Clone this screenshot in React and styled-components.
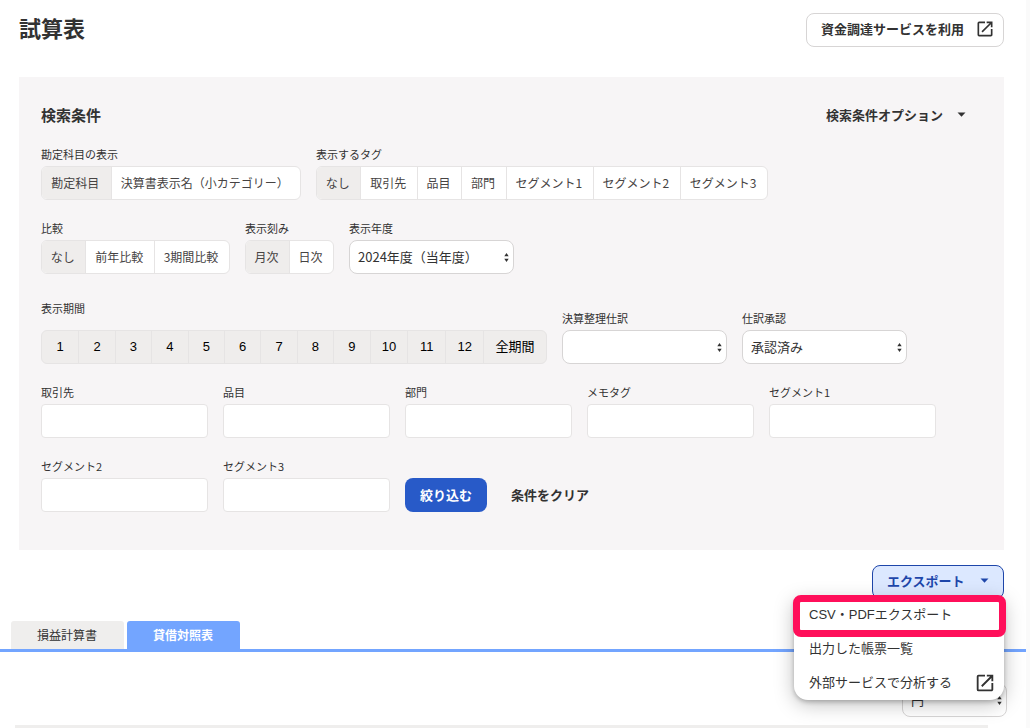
import React, { useId, useState } from "react";
import styled, { createGlobalStyle } from "styled-components";
import { MdOpenInNew } from "react-icons/md";

const GlobalStyle = createGlobalStyle`
  *, *::before, *::after { box-sizing: border-box; }
  body {
    margin: 0;
    background: #fff;
    color: #323232;
    font-family: "Noto Sans CJK JP", "Noto Sans", sans-serif;
    font-size: 13px;
    line-height: 20px;
  }
  button, input, select { font: inherit; color: inherit; margin: 0; }
  h1, h2 { margin: 0; }
`;

const Page = styled.main`
  border-right: 4px solid #fafafa;
`;

const PageHeader = styled.header`
  display: flex;
  justify-content: space-between;
  align-items: flex-start;
  padding: 13px 22px 0 19px;
  height: 77px;
`;

const Title = styled.h1`
  font-size: 22px;
  line-height: 28px;
  font-weight: 700;
`;

const LinkButton = styled.a`
  display: flex;
  align-items: center;
  gap: 11px;
  height: 34px;
  padding: 0 8px 2px 14px;
  border: 1px solid #d7d5d5;
  border-radius: 8px;
  background: #fff;
  color: #323232;
  font-weight: 700;
  text-decoration: none;
`;

const Panel = styled.section`
  margin: 0 22px 0 19px;
  padding: 26px 22px 38px;
  background: #f7f5f6;
`;

const PanelHeader = styled.div`
  display: flex;
  justify-content: space-between;
  align-items: center;
  height: 24px;
  margin-bottom: 19px;
  padding-right: 16px;
`;

const PanelTitle = styled.h2`
  font-size: 15px;
  line-height: 24px;
  font-weight: 700;
`;

const TextButton = styled.button`
  display: flex;
  align-items: center;
  gap: 14px;
  height: 34px;
  padding: 0 0 1px;
  border: 0;
  background: none;
  font-weight: 700;
  cursor: pointer;
`;

const Row = styled.div`
  display: flex;
  flex-wrap: wrap;
  align-items: flex-end;
  gap: 20px 15px;
  margin-top: ${(p) => p.$top || 0}px;
`;

const FieldBox = styled.div`
  display: flex;
  flex-direction: column;
  gap: ${(p) => (p.$loose ? 14 : 4)}px;
  width: ${(p) => (p.$width ? `${p.$width}px` : "auto")};
`;

const labelText = `
  font-size: 11px;
  line-height: 16px;
  white-space: nowrap;
`;
const FieldLabel = styled.label`${labelText}`;
const GroupLabel = styled.span`${labelText}`;

const Segments = styled.div`
  display: flex;
  height: 34px;
  border: 1px solid #e6e4e4;
  border-radius: 6px;
  background: #fff;
  overflow: hidden;
`;

const Segment = styled.label`
  position: relative;
  display: flex;
  flex: 1 1 auto;
  align-items: center;
  justify-content: center;
  padding: 0 10px 1px 8px;
  font-size: 12px;
  white-space: nowrap;
  color: #464343;
  cursor: pointer;
  & + & { border-left: 1px solid #e6e4e4; }
  &:has(input:checked) { background: #efedec; }
`;

const HiddenRadio = styled.input`
  position: absolute;
  inset: 0;
  margin: 0;
  opacity: 0;
  cursor: pointer;
`;

const Period = styled.div`
  display: grid;
  grid-template-columns: repeat(9, 73fr) repeat(3, 76fr) 126fr;
  height: 34px;
  border: 1px solid #e6e4e4;
  border-radius: 6px;
  background: #efedec;
  overflow: hidden;
`;

const PeriodButton = styled.button`
  padding: 0;
  border: 0;
  background: none;
  color: #000;
  font-family: "Liberation Sans", "Noto Sans CJK JP", sans-serif;
  font-size: 13px;
  white-space: nowrap;
  cursor: pointer;
  & + & { border-left: 1px solid #e6e4e4; }
`;

const SelectWrap = styled.div`
  position: relative;
  display: flex;
  width: ${(p) => p.$width}px;
`;

const SelectInput = styled.select`
  appearance: none;
  width: 100%;
  height: 34px;
  padding: 0 20px 1px 8px;
  border: 1px solid #d7d5d5;
  border-radius: 8px;
  background: #fff;
`;

const SelectArrows = styled.svg`
  position: absolute;
  right: 5px;
  top: 13px;
  pointer-events: none;
`;

const TextInput = styled.input`
  width: 100%;
  height: 34px;
  padding: 0 8px;
  border: 1px solid #e6e4e4;
  border-radius: 4px;
  background: #fff;
`;

const PrimaryButton = styled.button`
  height: 34px;
  margin-right: 9px;
  padding: 0 15px 1px;
  border: 0;
  border-radius: 8px;
  background: #285ac8;
  color: #fff;
  font-weight: 700;
  cursor: pointer;
`;

const Actions = styled.div`
  display: flex;
  justify-content: flex-end;
  padding: 15px 22px 0 0;
`;

const ExportBox = styled.div`
  position: relative;
`;

const ExportButton = styled.button`
  display: flex;
  align-items: center;
  justify-content: space-between;
  width: 132px;
  height: 34px;
  padding: 0 14px 3px;
  border: 1px solid #1e46aa;
  border-radius: 8px;
  background: #dce8ff;
  color: #1e46aa;
  font-weight: 700;
  cursor: pointer;
`;

const Menu = styled.ul`
  position: absolute;
  z-index: 2;
  top: 33px;
  right: 0;
  width: 210px;
  margin: 0;
  padding: 0;
  list-style: none;
  border-radius: 4px 4px 14px 14px;
  background: #fff;
  box-shadow: 0 2px 4px rgba(0, 0, 0, 0.22), 0 4px 20px rgba(0, 0, 0, 0.26);
`;

const MenuItem = styled.li`
  position: relative;
  ${(p) =>
    p.$marked &&
    `&::after {
      content: "";
      position: absolute;
      inset: -3px -2px -5px -1px;
      border: 7px solid #ff0f5a;
      border-radius: 8px;
      pointer-events: none;
    }`}
`;

const MenuLink = styled.a`
  display: flex;
  align-items: center;
  justify-content: space-between;
  height: 34px;
  padding: 0 8px 1px 15px;
  color: #323232;
  font-family: "Liberation Sans", "Noto Sans CJK JP", sans-serif;
  text-decoration: none;
`;

const Tabs = styled.div`
  display: flex;
  gap: 3px;
  padding: 22px 11px 0;
  border-bottom: 3px solid #73a5ff;
`;

const Tab = styled.button`
  width: 113px;
  height: 28px;
  padding: 0 1px 1px 0;
  border: 0;
  border-radius: 3px 3px 0 0;
  background: ${(p) => (p["aria-selected"] ? "#73a5ff" : "#efeeed")};
  color: ${(p) => (p["aria-selected"] ? "#fff" : "#323232")};
  font-size: 12px;
  font-weight: ${(p) => (p["aria-selected"] ? 700 : 400)};
  cursor: pointer;
`;

const UnitRow = styled.div`
  display: flex;
  justify-content: flex-end;
  padding: 31px 19px 8px 0;
`;

const TableTop = styled.div`
  height: 3px;
  margin: 0 38px 0 15px;
  background: #efeeed;
`;

const Caret = () => (
  <svg width="9" height="5" viewBox="0 0 9 5" aria-hidden="true">
    <path d="M0.5 0.5h8L4.5 4.7z" fill="currentColor" />
  </svg>
);

function SegmentGroup({ label, options, width }) {
  const name = useId();
  return (
    <FieldBox $width={width} role="radiogroup" aria-label={label}>
      <GroupLabel>{label}</GroupLabel>
      <Segments>
        {options.map((option, i) => (
          <Segment key={option}>
            <HiddenRadio type="radio" name={name} defaultChecked={i === 0} />
            {option}
          </Segment>
        ))}
      </Segments>
    </FieldBox>
  );
}

function Select({ options, width = 165, ...rest }) {
  return (
    <SelectWrap $width={width}>
      <SelectInput {...rest}>
        {options.map((option) => (
          <option key={option}>{option}</option>
        ))}
      </SelectInput>
      <SelectArrows width="5" height="9" viewBox="0 0 5 9" aria-hidden="true">
        <path d="M2.5 0L4.7 3.2H0.3zM2.5 9L4.7 5.8H0.3z" fill="#323232" />
      </SelectArrows>
    </SelectWrap>
  );
}

function SelectField({ label, options }) {
  const id = useId();
  return (
    <FieldBox>
      <FieldLabel htmlFor={id}>{label}</FieldLabel>
      <Select id={id} options={options} />
    </FieldBox>
  );
}

function TextField({ label }) {
  const id = useId();
  return (
    <FieldBox $width={167}>
      <FieldLabel htmlFor={id}>{label}</FieldLabel>
      <TextInput id={id} type="text" />
    </FieldBox>
  );
}

const periods = ["1", "2", "3", "4", "5", "6", "7", "8", "9", "10", "11", "12", "全期間"];
const filters = ["取引先", "品目", "部門", "メモタグ", "セグメント1", "セグメント2", "セグメント3"];
const tabs = ["損益計算書", "貸借対照表"];

export default function App() {
  const [tab, setTab] = useState(tabs[1]);
  const [open, setOpen] = useState(true);
  return (
    <>
      <GlobalStyle />
      <Page>
        <PageHeader>
          <Title>試算表</Title>
          <LinkButton href="#funding">
            資金調達サービスを利用
            <MdOpenInNew size={20} />
          </LinkButton>
        </PageHeader>

        <Panel>
          <PanelHeader>
            <PanelTitle>検索条件</PanelTitle>
            <TextButton type="button">
              検索条件オプション
              <Caret />
            </TextButton>
          </PanelHeader>
          <Row>
            <SegmentGroup
              label="勘定科目の表示"
              options={["勘定科目", "決算書表示名（小カテゴリー）"]}
              width={260}
            />
            <SegmentGroup
              label="表示するタグ"
              options={["なし", "取引先", "品目", "部門", "セグメント1", "セグメント2", "セグメント3"]}
              width={452}
            />
          </Row>
          <Row $top={20}>
            <SegmentGroup label="比較" options={["なし", "前年比較", "3期間比較"]} width={189} />
            <SegmentGroup label="表示刻み" options={["月次", "日次"]} width={89} />
            <SelectField label="表示年度" options={["2024年度（当年度）"]} />
          </Row>
          <Row $top={26}>
            <FieldBox $width={506} $loose role="group" aria-label="表示期間">
              <GroupLabel>表示期間</GroupLabel>
              <Period>
                {periods.map((period) => (
                  <PeriodButton key={period} type="button">{period}</PeriodButton>
                ))}
              </Period>
            </FieldBox>
            <SelectField label="決算整理仕訳" options={[""]} />
            <SelectField label="仕訳承認" options={["承認済み"]} />
          </Row>
          <Row $top={20}>
            {filters.map((filter) => (
              <TextField key={filter} label={filter} />
            ))}
            <PrimaryButton type="button">絞り込む</PrimaryButton>
            <TextButton type="button">条件をクリア</TextButton>
          </Row>
        </Panel>

        <Actions>
          <ExportBox>
            <ExportButton type="button" aria-expanded={open} onClick={() => setOpen(!open)}>
              エクスポート
              <Caret />
            </ExportButton>
            {open && (
              <Menu>
                <MenuItem $marked>
                  <MenuLink href="#export">CSV・PDFエクスポート</MenuLink>
                </MenuItem>
                <MenuItem>
                  <MenuLink href="#reports">出力した帳票一覧</MenuLink>
                </MenuItem>
                <MenuItem>
                  <MenuLink href="#analysis">
                    外部サービスで分析する
                    <MdOpenInNew size={22} />
                  </MenuLink>
                </MenuItem>
              </Menu>
            )}
          </ExportBox>
        </Actions>

        <Tabs role="tablist">
          {tabs.map((name) => (
            <Tab
              key={name}
              type="button"
              role="tab"
              aria-selected={tab === name}
              onClick={() => setTab(name)}
            >
              {name}
            </Tab>
          ))}
        </Tabs>
        <UnitRow>
          <Select aria-label="単位" options={["円"]} width={105} />
        </UnitRow>
        <TableTop />
      </Page>
    </>
  );
}
